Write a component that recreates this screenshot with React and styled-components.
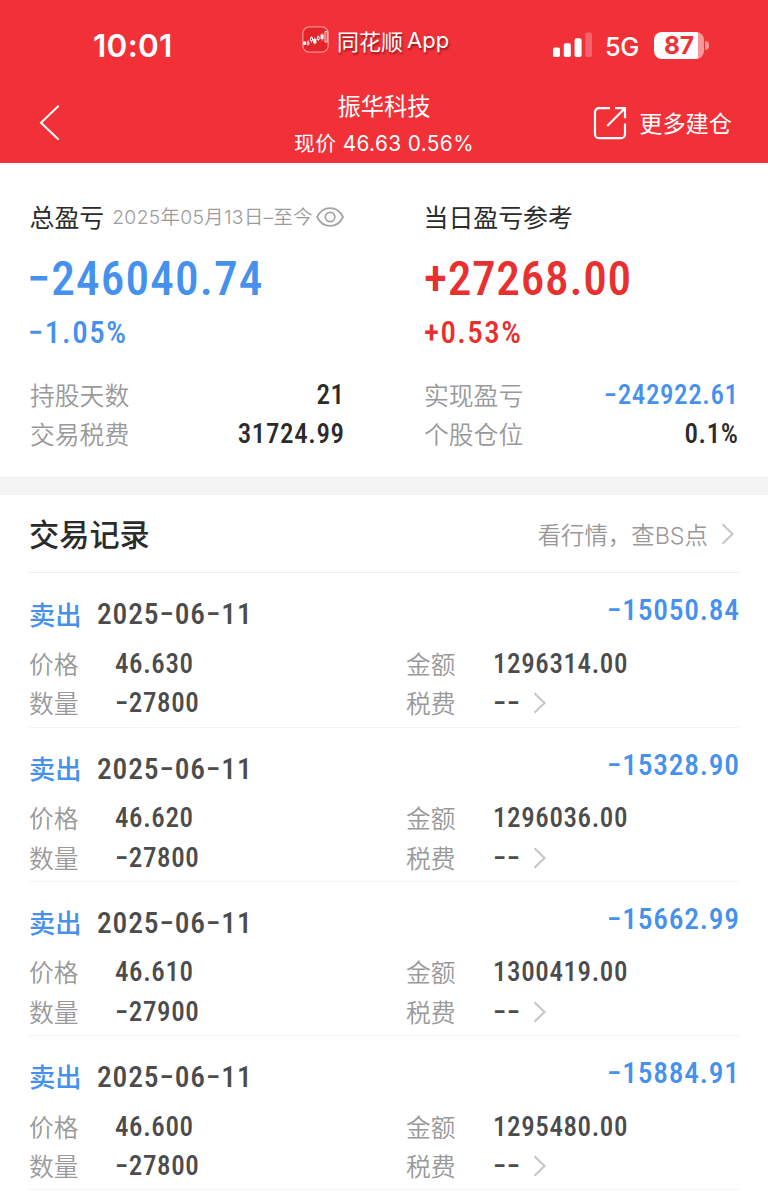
import React from "react";
import styled, { createGlobalStyle } from "styled-components";

const BLUE = "#4691ee";
const RED = "#e93030";

const GlobalStyle = createGlobalStyle`
  * {
    box-sizing: border-box;
  }

  body {
    margin: 0;
    background: #fff;
    font-family: Inter, "Noto Sans CJK SC", sans-serif;
    color: #2b2b2b;
  }
`;

const Page = styled.div`
  width: 768px;
  height: 1200px;
  overflow: hidden;
  background: #fff;
  white-space: nowrap;
`;

// condensed tabular figures used for every amount on the page
const Figure = styled.span`
  font-family: Roboto, sans-serif;
  font-weight: 500;
  font-stretch: 75%;
  font-size: ${p => p.size}px;
  letter-spacing: ${p => p.spacing || 0}px;
  margin-right: ${p => -(p.spacing || 0)}px;
  color: ${p => p.color || "inherit"};
`;

const Header = styled.header`
  height: 163px;
  background: #f23038;
  color: #fff;
`;

const StatusBar = styled.div`
  display: flex;
  align-items: center;
  height: 90px;
  padding-left: 93px;
`;

const Clock = styled.div`
  width: 209px;
  font-size: 31.5px;
  font-weight: 600;
  letter-spacing: 0.3px;
`;

const AppLabel = styled.div`
  display: flex;
  align-items: center;
  width: 251px;
  margin-top: -11px;
  font-size: 22px;
  text-shadow: 1px 2px 2px rgba(80, 0, 0, 0.55);

  svg {
    margin-right: 8px;
  }

  em {
    margin-left: 4px;
    font-style: normal;
  }
`;

const Network = styled.div`
  width: 35px;
  margin: 2px 14px 0 13px;
  font-size: 25.5px;
  font-weight: 500;
  letter-spacing: -0.6px;
`;

const Battery = styled.div`
  width: 50px;
  height: 27px;
  border-radius: 8px;
  background: linear-gradient(to right, #fff 44px, rgba(255, 255, 255, 0.5) 44px);
  color: #f23038;
  font-size: 24.5px;
  font-weight: 700;
  line-height: 27px;
  text-align: center;
`;

const BatteryNub = styled.div`
  width: 4px;
  height: 9px;
  margin-left: 1px;
  border-radius: 0 4px 4px 0;
  background: rgba(255, 255, 255, 0.5);
`;

const NavBar = styled.div`
  display: grid;
  grid-template-columns: 195px 1fr 197px;
  height: 73px;
  padding: 0 36px 0 38px;
`;

const NavBack = styled.div`
  padding-top: 14px;
`;

const NavTitle = styled.div`
  text-align: center;

  h1 {
    margin: 0;
    font-size: 23.3px;
    font-weight: 400;
    line-height: 34px;
  }

  p {
    margin: 3px -10px 0;
    font-size: 20.8px;
    line-height: 34px;
    letter-spacing: 0.4px;
  }
`;

const NavAction = styled.div`
  display: flex;
  align-items: center;
  justify-content: flex-end;
  height: 66px;
  font-size: 23.2px;

  span {
    margin: -2px 0 0 12px;
  }
`;

const Summary = styled.section`
  display: grid;
  grid-template-columns: 314px 314px;
  column-gap: 80px;
  height: 314px;
  padding: 36px 30px 0;
`;

const SummaryTitle = styled.div`
  display: flex;
  align-items: center;
  height: 36px;
  font-size: 24.9px;

  span {
    margin: -2px 0 0 -0.5px;
  }

  small {
    margin: -2px 3px 0 8px;
    font-size: 19.3px;
    font-weight: 350;
    letter-spacing: 0.35px;
    color: #9c9c9c;
  }
`;

const SummaryAmount = styled.div`
  height: 64px;
  margin: 12px 0 0 ${p => (p.$loss ? -3 : 0)}px;
  line-height: 64px;
`;

const SummaryRate = styled.div`
  height: 44px;
  margin: 0 0 20px ${p => (p.$loss ? -2 : 0)}px;
  line-height: 44px;
`;

const SummaryRow = styled.div`
  display: flex;
  align-items: center;
  justify-content: space-between;
  height: 39.5px;
`;

const Label = styled.span`
  margin-top: -2px;
  font-size: 24.8px;
  font-weight: 350;
  color: #999;
`;

const Divider = styled.div`
  height: 18px;
  background: #f4f4f4;
`;

const Records = styled.section`
  padding: 0 29px;
`;

const RecordsHead = styled.div`
  display: flex;
  align-items: center;
  justify-content: space-between;
  height: 78.4px;
  border-bottom: 1px solid #ececec;

  h2 {
    margin: -2px 0 0;
    font-size: 30.2px;
    font-weight: 500;
  }
`;

const MoreLink = styled.div`
  display: flex;
  align-items: center;
  padding-right: 4px;
  font-size: 23.4px;
  font-weight: 350;
  color: #999;

  svg {
    margin-left: 13px;
  }
`;

const Record = styled.article`
  height: 154.2px;
  padding-top: 20px;
  border-bottom: 1px solid #f4f4f4;
`;

const RecordHead = styled.div`
  display: flex;
  align-items: center;
  height: 42px;
  margin-bottom: 9px;
  color: #4c4c4c;
`;

const Side = styled.span`
  width: 68px;
  margin-top: -2px;
  font-size: 26.3px;
  font-weight: 500;
  color: ${BLUE};
`;

const Profit = styled.div`
  margin: -8px 0 0 auto;
`;

const Fields = styled.div`
  display: grid;
  grid-template-columns: 86px 291px 87px 1fr;
  grid-auto-rows: 39.4px;
  align-items: center;
  color: #4c4c4c;
`;

const TaxValue = styled.div`
  display: flex;
  align-items: center;

  svg {
    margin-left: 13px;
  }
`;

const AppLogo = () => (
  <svg width="27" height="27" viewBox="0 0 27 27" fill="none">
    <rect x="0.8" y="0.8" width="25.4" height="25.4" rx="6.5" fill="#e3242a" stroke="#ff8d8d" strokeWidth="1.3" />
    <path d="M1 15.500h3v3.500H1zM11.200 13h3.200v4.200h-3.200zM18.600 8.500h3v4.500h-3z" fill="#fff" />
    <path d="M6.100 14.500v5M9.500 10.500v6M12.800 11.500v7M16.300 9.500v5.500M20.100 7.500v7" stroke="#fff" strokeWidth="0.8" />
    <path d="M5.200 16h1.800v2.300H5.200zM8.500 11.700h2v3h-2zM15.400 10.800h1.800v2.700h-1.800zM23 5.500h2.200v10.500H23z" fill="#e3242a" stroke="#fff" strokeWidth="0.9" />
  </svg>
);

const Signal = () => (
  <svg width="39" height="26" viewBox="0 0 39 26" fill="#fff">
    <rect x="0" y="15.500" width="7" height="9.500" rx="1.800" />
    <rect x="10.800" y="11.300" width="7" height="13.700" rx="1.800" />
    <rect x="21.600" y="6.300" width="7" height="18.700" rx="1.800" />
    <rect x="32.300" y="0.500" width="6.700" height="24.500" rx="1.800" opacity="0.25" />
  </svg>
);

const BackIcon = () => (
  <svg width="24" height="38" viewBox="0 0 24 38" fill="none" stroke="#fff" strokeWidth="2">
    <path d="M20.700 1.700L3 18.700l17.700 17" />
  </svg>
);

const ShareIcon = () => (
  <svg width="34" height="34" viewBox="0 0 34 34" fill="none" stroke="#fff" strokeWidth="2.200">
    <path d="M17 2.200H6a4 4 0 0 0-4 4v22a4 4 0 0 0 4 4h22a4 4 0 0 0 4-4V17.500" />
    <path d="M22 2.200h10v10M31.500 2.700L14.200 20" />
  </svg>
);

const EyeIcon = () => (
  <svg width="30" height="22" viewBox="0 0 30 22" fill="none" stroke="#a3a3a3" strokeWidth="1.800">
    <path d="M1.200 11C4.200 5 9 1.500 15 1.500S25.800 5 28.800 11C25.800 17 21 20.500 15 20.500S4.200 17 1.200 11z" />
    <circle cx="15" cy="11" r="5" />
  </svg>
);

const ChevronIcon = () => (
  <svg width="14" height="22" viewBox="0 0 14 22" fill="none" stroke="#c8c8c8" strokeWidth="2.200">
    <path d="M1.500 1.200L11.500 11 1.500 20.800" />
  </svg>
);

const records = [
  { date: "2025−06−11", profit: "−15050.84", price: "46.630", count: "−27800", amount: "1296314.00" },
  { date: "2025−06−11", profit: "−15328.90", price: "46.620", count: "−27800", amount: "1296036.00" },
  { date: "2025−06−11", profit: "−15662.99", price: "46.610", count: "−27900", amount: "1300419.00" },
  { date: "2025−06−11", profit: "−15884.91", price: "46.600", count: "−27800", amount: "1295480.00" },
];

const Value = props => <Figure size={27} spacing={0.6} {...props} />;

const TradeRecord = ({ record }) => (
  <Record>
    <RecordHead>
      <Side>卖出</Side>
      <Figure size={29.5} spacing={0.85}>{record.date}</Figure>
      <Profit>
        <Figure size={29.5} spacing={0.75} color={BLUE}>{record.profit}</Figure>
      </Profit>
    </RecordHead>
    <Fields>
      <Label>价格</Label>
      <Value>{record.price}</Value>
      <Label>金额</Label>
      <Value>{record.amount}</Value>
      <Label>数量</Label>
      <Value>{record.count}</Value>
      <Label>税费</Label>
      <TaxValue>
        <Value>−−</Value>
        <ChevronIcon />
      </TaxValue>
    </Fields>
  </Record>
);

const App = () => (
  <Page>
    <GlobalStyle />
    <Header>
      <StatusBar>
        <Clock>10:01</Clock>
        <AppLabel>
          <AppLogo />
          同花顺<em>App</em>
        </AppLabel>
        <Signal />
        <Network>5G</Network>
        <Battery>87</Battery>
        <BatteryNub />
      </StatusBar>
      <NavBar>
        <NavBack>
          <BackIcon />
        </NavBack>
        <NavTitle>
          <h1>振华科技</h1>
          <p>现价 46.63 0.56%</p>
        </NavTitle>
        <NavAction>
          <ShareIcon />
          <span>更多建仓</span>
        </NavAction>
      </NavBar>
    </Header>
    <Summary>
      <div>
        <SummaryTitle>
          <span>总盈亏</span>
          <small>2025年05月13日–至今</small>
          <EyeIcon />
        </SummaryTitle>
        <SummaryAmount $loss>
          <Figure size={47.3} spacing={1.1} color={BLUE}>−246040.74</Figure>
        </SummaryAmount>
        <SummaryRate $loss>
          <Figure size={31} spacing={1.6} color={BLUE}>−1.05%</Figure>
        </SummaryRate>
        <SummaryRow>
          <Label>持股天数</Label>
          <Value>21</Value>
        </SummaryRow>
        <SummaryRow>
          <Label>交易税费</Label>
          <Value>31724.99</Value>
        </SummaryRow>
      </div>
      <div>
        <SummaryTitle>
          <span>当日盈亏参考</span>
        </SummaryTitle>
        <SummaryAmount>
          <Figure size={47.3} spacing={0.7} color={RED}>+27268.00</Figure>
        </SummaryAmount>
        <SummaryRate>
          <Figure size={31} spacing={1.4} color={RED}>+0.53%</Figure>
        </SummaryRate>
        <SummaryRow>
          <Label>实现盈亏</Label>
          <Value color={BLUE}>−242922.61</Value>
        </SummaryRow>
        <SummaryRow>
          <Label>个股仓位</Label>
          <Value>0.1%</Value>
        </SummaryRow>
      </div>
    </Summary>
    <Divider />
    <Records>
      <RecordsHead>
        <h2>交易记录</h2>
        <MoreLink>
          看行情，查BS点
          <ChevronIcon />
        </MoreLink>
      </RecordsHead>
      {records.map(record => (
        <TradeRecord key={record.profit} record={record} />
      ))}
    </Records>
  </Page>
);

export default App;
